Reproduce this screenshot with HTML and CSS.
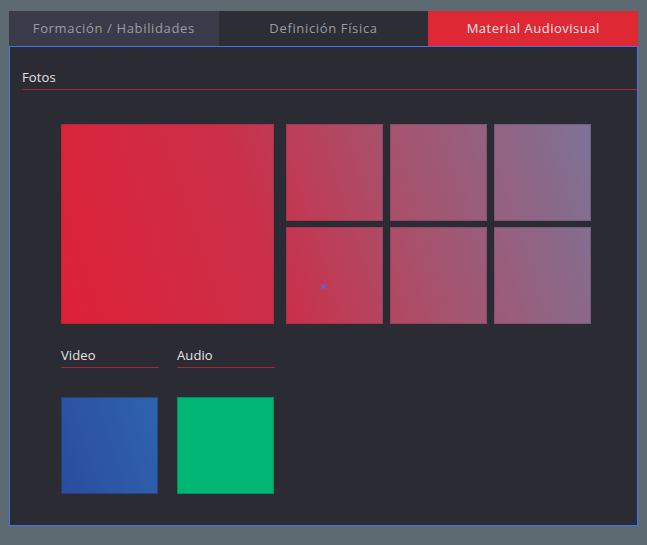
FILE: index.html
```html
<!DOCTYPE html>
<html lang="es">
<head>
<meta charset="utf-8">
<title>Material Audiovisual</title>
<link rel="stylesheet" href="styles.css">
</head>
<body>
  <div class="tabs">
    <div class="tab tab-light">Formación / Habilidades</div>
    <div class="tab tab-dark">Definición Física</div>
    <div class="tab tab-active">Material Audiovisual</div>
  </div>
  <div class="panel">
    <div class="section-title fotos-title">Fotos</div>
    <div class="gallery">
      <div class="tile big t-big"></div>
      <div class="grid">
        <div class="tile t-r1c1"></div>
        <div class="tile t-r1c2"></div>
        <div class="tile t-r1c3"></div>
        <div class="tile t-r2c1">
          <svg class="marker" width="5" height="5" viewBox="0 0 5 5"><path d="M0.5 0.5 L4.5 4.5 M4.5 0.5 L0.5 4.5" stroke="#4b6cf2" stroke-width="1.2" fill="none"/></svg>
        </div>
        <div class="tile t-r2c2"></div>
        <div class="tile t-r2c3"></div>
      </div>
    </div>
    <div class="media">
      <div class="media-col">
        <div class="section-title">Video</div>
        <div class="media-tile video"></div>
      </div>
      <div class="media-col">
        <div class="section-title">Audio</div>
        <div class="media-tile audio"></div>
      </div>
    </div>
  </div>
</body>
</html>
```
FILE: styles.css
```css
* { box-sizing: border-box; }

html, body {
  margin: 0;
  background: #5e6a72;
}

body {
  padding: 11px 9px 0 9px;
  font-family: "Open Sans", "Noto Sans", sans-serif;
  font-size: 13px;
  height: 545px;
}

.tabs {
  display: flex;
  height: 35px;
}

.tab {
  flex: 1 1 0;
  text-align: center;
  line-height: 35px;
  letter-spacing: 0.65px;
  color: #9a9ca5;
  white-space: nowrap;
}

.tab-light { background: #393c48; }
.tab-dark { background: #2c2d35; }
.tab-active { background: #de2935; color: #f6e3e4; letter-spacing: 0.5px; }

.panel {
  height: 480px;
  background: #2b2c33;
  border: 1px solid #4172ee;
  padding-top: 22px;
}

.section-title {
  line-height: 16px;
  padding-bottom: 4px;
  color: #e4e4e6;
  letter-spacing: 0.1px;
  border-bottom: 1px solid #9b2a34;
}

.fotos-title {
  margin-left: 12px;
}

.gallery {
  margin: 34px 0 0 51px;
  display: flex;
  gap: 12px;
  height: 200px;
}

.tile {
  position: relative;
  width: 97px;
  height: 97px;
  background-image: linear-gradient(72deg, #dd2137 0%, #cb2f49 38%, #a6536e 66%, #7d7396 100%);
  background-size: 530px 200px;
  background-repeat: no-repeat;
  box-shadow: inset 0 0 0 1px rgba(60, 40, 70, 0.22);
}

.tile.big {
  width: 213px;
  height: 200px;
}

.grid {
  display: grid;
  grid-template-columns: repeat(3, 97px);
  grid-template-rows: repeat(2, 97px);
  column-gap: 7px;
  row-gap: 6px;
}

.t-big { background-position: 0 0; }
.t-r1c1 { background-position: -225px 0; }
.t-r1c2 { background-position: -329px 0; }
.t-r1c3 { background-position: -433px 0; }
.t-r2c1 { background-position: -225px -103px; }
.t-r2c2 { background-position: -329px -103px; }
.t-r2c3 { background-position: -433px -103px; }

.marker {
  position: absolute;
  left: 35px;
  top: 57px;
  display: block;
}

.media {
  display: flex;
  gap: 18px;
  margin: 23px 0 0 51px;
}

.media-col {
  width: 98px;
}

.media-tile {
  width: 97px;
  height: 97px;
  margin-top: 29px;
}

.video {
  background: linear-gradient(72deg, #2b4c9e 0%, #2d58a6 50%, #2e63ae 100%);
  box-shadow: inset 0 0 0 1px rgba(20, 30, 60, 0.35);
}

.audio {
  background: #01b574;
  box-shadow: inset 0 0 0 1px rgba(10, 60, 40, 0.3);
}
```
